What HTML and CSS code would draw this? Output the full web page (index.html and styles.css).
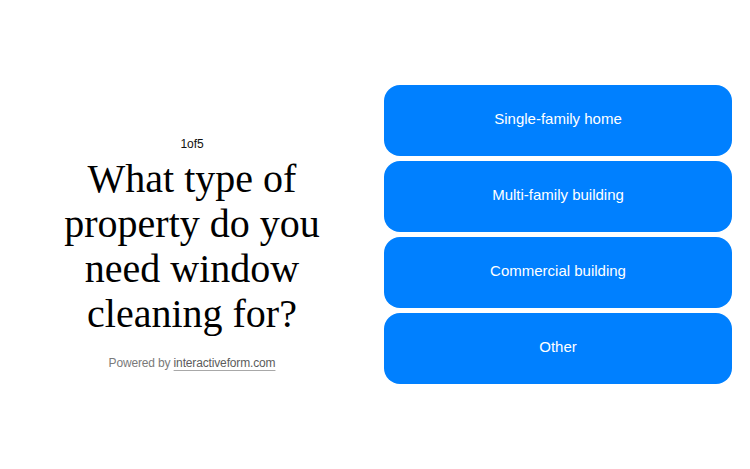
FILE: index.html
```html
<!DOCTYPE html>
<html lang="en">
<head>
<meta charset="utf-8">
<title>What type of property</title>
<link rel="stylesheet" href="styles.css">
</head>
<body>
<main class="page">
  <section class="intro">
    <div class="step">1of5</div>
    <h1 class="question">What type of property do you need window cleaning for?</h1>
    <div class="powered">Powered by <a class="brand" href="#">interactiveform.com</a></div>
  </section>
  <section class="options">
    <button class="option">Single-family home</button>
    <button class="option">Multi-family building</button>
    <button class="option">Commercial building</button>
    <button class="option">Other</button>
  </section>
</main>
</body>
</html>
```

FILE: styles.css
```css
html, body {
  margin: 0;
  padding: 0;
  background: #ffffff;
}

.page {
  box-sizing: border-box;
  width: 750px;
  height: 469px;
  padding: 0 18px;
  display: grid;
  grid-template-columns: 348px 348px;
  column-gap: 18px;
  align-items: center;
}

.intro {
  display: flex;
  flex-direction: column;
  align-items: center;
  text-align: center;
  padding-top: 39px;
}

.step {
  font-family: "Liberation Sans", Arial, sans-serif;
  font-size: 12px;
  line-height: 16px;
  letter-spacing: -0.1px;
  color: #111111;
}

.question {
  margin: 4px 0 0;
  font-family: "Liberation Serif", "Times New Roman", serif;
  font-weight: normal;
  font-size: 40px;
  line-height: 45px;
  color: #000000;
  width: 280px;
}

.powered {
  margin-top: 17px;
  font-family: "Liberation Sans", Arial, sans-serif;
  font-size: 12px;
  line-height: 20px;
  letter-spacing: -0.15px;
  color: #7a7a7a;
}

.brand {
  color: #5c5c5c;
  text-decoration: underline;
  text-decoration-color: #a8a8a8;
  text-decoration-thickness: 1px;
  text-underline-offset: 3px;
}

.options {
  display: flex;
  flex-direction: column;
  gap: 5px;
}

.option {
  height: 71px;
  border: none;
  border-radius: 16px;
  background: #0080ff;
  color: #ffffff;
  font-family: "Liberation Sans", Arial, sans-serif;
  font-size: 15px;
  padding: 0 0 4px;
  cursor: pointer;
}
```
